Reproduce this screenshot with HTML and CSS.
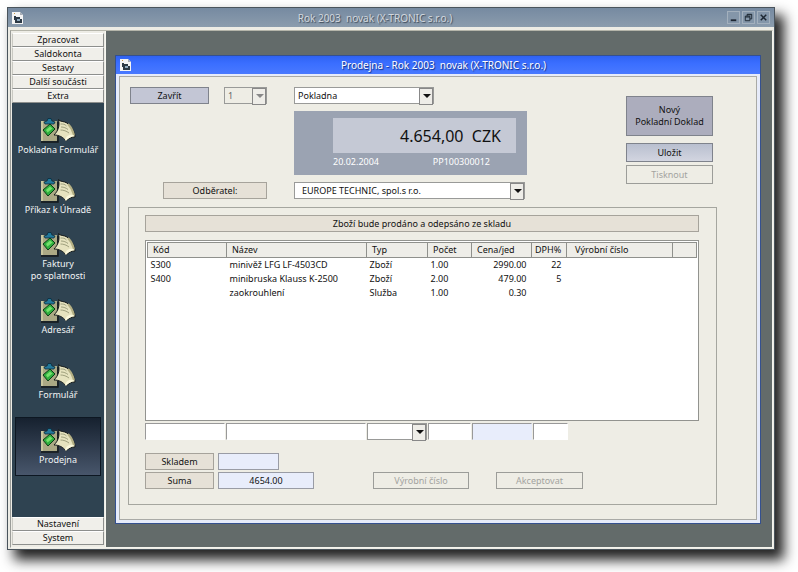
FILE: index.html
```html
<!DOCTYPE html>
<html lang="cs">
<head>
    <meta charset="UTF-8">
    <meta name="viewport" content="width=device-width, initial-scale=1.0">
    <title>Rok 2003 novak (X-TRONIC s.r.o.)</title>
    <link rel="stylesheet" href="styles.css">
</head>
<body>
    <svg class="defs" aria-hidden="true">
        <symbol id="clipboard" viewBox="0 0 36 25">
            <path d="M1 3h16v20H1z" fill="#aba985"/>
            <path d="M1 3h2v20H1z" fill="#c9c7a0"/>
            <path d="M1 24h17V4" fill="none" stroke="#14191a" stroke-width="1.500"/>
            <path d="M4 4l3-1 1-2.500h3L12 3l3 1-1 2H5z" fill="#23789a" stroke="#0a2c3c" stroke-width=".8"/>
            <path d="M3 12l7-6 5 5-7 7z" fill="#2fae3e" stroke="#0c3c16"/>
            <path d="M6 12l4-3.500 2.500 2-5 4z" fill="#74e06c"/>
            <path d="M18.500 1.500C20 4 24 3 27 5c4 3 8 9 8 14-3 0-6 1-9 4-3-4-7-6-12-6 4-4 6-9 4.500-15.500z" fill="#e6e3bf" stroke="#14191a"/>
            <path d="M25 22c1-4 5-7 10-4-3 0-7 2-9 5z" fill="#faf8dc"/>
            <path d="M28 6c3 3 5 7 6 11" fill="none" stroke="#b4b085" stroke-width="2"/>
            <path d="M20.500 6c3 0 4 0 6 2M21 9c3 0 5 1 7 2.500M20.500 12c3 0 6 1 8.500 3" fill="none" stroke="#8b8e6c" stroke-width=".8"/>
        </symbol>
        <symbol id="app" viewBox="0 0 11 12">
            <path d="M0 0h8l3 3v9H0z" fill="#f4f4f4"/>
            <path d="M8 0v3h3z" fill="#a8adb5"/>
            <path d="M2 4h2v1h4v2h2v4H3V8H2z" fill="#2c3945"/>
            <path d="M5 7h3v2H5z" fill="#8fa9bd"/>
            <path d="M2 1h1v1H2z" fill="#c79a4c"/>
        </symbol>
    </svg>

    <div class="window">
        <div class="titlebar">
            <svg class="app-icon"><use href="#app"/></svg>
            <h1 class="title">Rok 2003&nbsp; novak (X-TRONIC s.r.o.)</h1>
            <div class="controls">
                <button class="control" aria-label="Minimalizovat"><svg viewBox="0 0 12 12"><path d="M3 9h6" stroke-width="2"/></svg></button>
                <button class="control" aria-label="Obnovit"><svg viewBox="0 0 12 12"><path d="M4.500 4.500v-2h5v5h-2M2.500 4.500h5v5h-5zM2.500 5.500h5M4.500 3h5"/></svg></button>
                <button class="control" aria-label="Ukončit"><svg viewBox="0 0 12 12"><path d="M3 3l6 6M9 3l-6 6" stroke-width="1.600"/></svg></button>
            </div>
        </div>
        <div class="workspace">
            <nav class="sidebar">
                <button class="tab">Zpracovat</button>
                <button class="tab">Saldokonta</button>
                <button class="tab">Sestavy</button>
                <button class="tab">Další součásti</button>
                <button class="tab">Extra</button>
                <div class="shortcuts">
                    <button class="shortcut"><svg><use href="#clipboard"/></svg>Pokladna Formulář</button>
                    <button class="shortcut"><svg><use href="#clipboard"/></svg>Příkaz k Úhradě</button>
                    <button class="shortcut"><svg><use href="#clipboard"/></svg>Faktury<br>po splatnosti</button>
                    <button class="shortcut"><svg><use href="#clipboard"/></svg>Adresář</button>
                    <button class="shortcut spaced"><svg><use href="#clipboard"/></svg>Formulář</button>
                    <button class="shortcut spaced active"><svg><use href="#clipboard"/></svg>Prodejna</button>
                </div>
                <button class="tab">Nastavení</button>
                <button class="tab">System</button>
            </nav>
            <main class="desktop">
                <div class="dialog">
                    <div class="titlebar dialog-titlebar">
                        <svg class="app-icon"><use href="#app"/></svg>
                        <h2 class="title">Prodejna - Rok 2003&nbsp; novak (X-TRONIC s.r.o.)</h2>
                    </div>
                    <form class="sale">
                        <div class="top">
                            <div class="close-row">
                                <button type="button" class="btn close">Zavřít</button>
                                <span class="combo disabled"><select aria-label="Číslo" disabled><option>1</option></select></span>
                            </div>
                            <span class="combo register"><select aria-label="Typ dokladu"><option>Pokladna</option></select></span>
                            <div class="display">
                                <output class="total">4.654,00&nbsp; CZK</output>
                                <div class="document"><span>20.02.2004</span><span>PP100300012</span></div>
                            </div>
                            <label class="caption customer-label" for="customer">Odběratel:</label>
                            <span class="combo customer"><select id="customer"><option>EUROPE TECHNIC, spol.s r.o.</option></select></span>
                            <div class="actions">
                                <button type="button" class="btn new">Nový<br>Pokladní Doklad</button>
                                <button type="button" class="btn save">Uložit</button>
                                <button type="button" class="btn print" disabled>Tisknout</button>
                            </div>
                        </div>
                        <section class="group">
                            <div class="caption">Zboží bude prodáno a odepsáno ze skladu</div>
                            <div class="list">
                                <table class="items">
                                    <colgroup>
                                        <col class="c-code"><col class="c-name"><col class="c-type"><col class="c-count">
                                        <col class="c-price"><col class="c-vat"><col><col class="c-end">
                                    </colgroup>
                                    <thead>
                                        <tr><th>Kód</th><th>Název</th><th>Typ</th><th>Počet</th><th>Cena/jed</th><th class="vat">DPH%</th><th class="serial-no">Výrobní číslo</th><th></th></tr>
                                    </thead>
                                    <tbody>
                                        <tr><td>S300</td><td>minivěž LFG LF-4503CD</td><td>Zboží</td><td>1.00</td><td class="num">2990.00</td><td class="num">22</td><td></td><td></td></tr>
                                        <tr><td>S400</td><td>minibruska Klauss K-2500</td><td>Zboží</td><td>2.00</td><td class="num">479.00</td><td class="num">5</td><td></td><td></td></tr>
                                        <tr><td></td><td>zaokrouhlení</td><td>Služba</td><td>1.00</td><td class="num">0.30</td><td class="num"></td><td></td><td></td></tr>
                                    </tbody>
                                </table>
                            </div>
                            <div class="entry">
                                <input class="field" aria-label="Kód">
                                <input class="field" aria-label="Název">
                                <span class="combo"><select aria-label="Typ"><option></option></select></span>
                                <input class="field" aria-label="Počet">
                                <input class="field readonly" aria-label="Cena/jed" readonly>
                                <input class="field" aria-label="DPH%">
                            </div>
                            <div class="summary">
                                <label class="caption" for="stock">Skladem</label>
                                <input class="result stock" id="stock" readonly>
                                <label class="caption" for="sum">Suma</label>
                                <input class="result" id="sum" value="4654.00" readonly>
                                <div class="line-actions">
                                    <button type="button" class="btn serial" disabled>Výrobní číslo</button>
                                    <button type="button" class="btn accept" disabled>Akceptovat</button>
                                </div>
                            </div>
                        </section>
                    </form>
                </div>
            </main>
        </div>
    </div>
</body>
</html>
```

FILE: styles.css
```css
* { box-sizing: border-box; }
body { margin: 0; padding: 7px 23px 23px 7px; background: #fff; color: #111; font-family: "Noto Sans", "Open Sans", sans-serif; font-size: 9px; line-height: 12px; }
button, input, select { font: inherit; color: inherit; margin: 0; padding: 0; border-radius: 0; }
.defs { position: absolute; width: 0; height: 0; }

/* main window */
.window { border: 1px solid #4a545c; background: #edece5; box-shadow: 8px 9px 12px 1px #222; }
.titlebar { display: flex; align-items: center; height: 19px; padding: 0 4px; background: linear-gradient(#768aa1, #8b9cad); color: #d3d8de; }
.title { flex: 1; margin: 0; font-size: 10px; font-weight: normal; line-height: 14px; text-align: center; text-shadow: 1px 1px 1px #3d4a58; }
.app-icon { width: 11px; height: 12px; }
.controls { display: flex; gap: 2px; }
.control { width: 13px; height: 13px; border: 1px solid #a3b0bd; background: #8496a9; }
.control svg { display: block; width: 11px; height: 11px; fill: none; stroke: #1d2732; }
.workspace { display: flex; margin: 3px 1px 1px 2px; border: 1px solid #9a9c98; border-color: #b5b5aa #f4f4ee #f4f4ee #9a9c98; }

/* left menu */
.sidebar { display: flex; flex-direction: column; width: 95px; padding: 2px 1px; background: #edece5; border-right: 1px solid #f6f6f0; }
.tab { height: 14px; border: 1px solid #8d8f8d; border-top-color: #fff; border-left-color: #c9c9c2; background: #f0efea; text-align: center; }
.shortcuts { display: flex; flex: 1; flex-direction: column; gap: 1px; padding: 4px 3px; background: #2f4351; }
.shortcut { display: flex; flex-direction: column; align-items: center; justify-content: center; height: 59px; border: 1px solid transparent; background: none; color: #f2f4f5; white-space: nowrap; }
.shortcut svg { width: 36px; height: 25px; margin-bottom: 1px; }
.spaced { margin-top: 5px; }
.active { border-color: #0d1722; background: linear-gradient(#16212f, #48566b); }

/* sales dialog */
.desktop { flex: 1; padding: 24px 11px 23px 9px; background: #636b6a; }
.dialog { border: 1px solid #34508f; background: #e6ebf9; }
.dialog-titlebar { height: 18px; background: linear-gradient(#2f62f2, #3a6eff 40%, #4979ff); color: #fff; }
.dialog-titlebar .title { text-shadow: 1px 1px 1px #14307e; }
.sale { margin: 2px 3px 3px; padding: 10px 39px 14px 8px; border: 1px solid #a9aaa6; background: #eeede5; }
.top { display: grid; grid-template-columns: 137px 233px 1fr; gap: 7px 27px; padding: 0 4px 8px 2px; }
.close-row { display: flex; justify-content: space-between; }
.close-row .combo { width: 43px; }
.btn { height: 19px; border: 1px solid #7f838c; background: linear-gradient(#b9bfcf, #d2d5e0); text-align: center; }
.btn:disabled { border-color: #9c9d99; background: #eeede5; color: #a3a39f; }
.close { width: 79px; height: 17px; background: #c3c6d5; }
.caption { display: block; height: 17px; border: 1px solid #a6a39b; background: #e6e1d7; text-align: center; line-height: 15px; }
.customer-label { width: 104px; justify-self: end; }
.register { width: 140px; }
.customer { grid-column: 2; width: 231px; }

/* drop-downs with a square arrow button */
.combo { position: relative; display: block; height: 17px; }
.combo select { display: block; width: 100%; height: 100%; padding-left: 3px; border: 1px solid #999a98; background: #fff; appearance: none; line-height: 13px; }
.combo::before { content: ""; position: absolute; top: 1px; right: 1px; width: 12px; height: 15px; border: 1px solid #888; background: #eeede8; pointer-events: none; }
.combo::after { content: ""; position: absolute; top: 7px; right: 3px; border: 4px solid transparent; border-top-color: #111; border-bottom: 0; pointer-events: none; }
.customer select { padding-left: 7px; }
.disabled select { background: #eeede5; color: #666; opacity: 1; }
.disabled::after { border-top-color: #888; }

.display { grid-column: 2; height: 64px; padding: 7px 11px 0 39px; background: #9ba3b2; }
.total { display: block; height: 35px; padding-right: 15px; background: #c5c9d5; font-size: 16px; line-height: 36px; text-align: right; }
.document { display: flex; justify-content: space-between; padding: 3px 26px 0 0; color: #fff; }
.actions { grid-area: 1 / 3 / 4 / 4; display: flex; flex-direction: column; gap: 3px; justify-self: end; width: 87px; padding-top: 9px; }
.new { height: 40px; margin-bottom: 4px; background: #acadbd; }

/* item list */
.group { padding: 7px 17px 15px 16px; border: 1px solid #a5a69f; }
.list { min-height: 181px; margin-top: 8px; padding: 1px; border: 1px solid #92938f; background: #fff; }
.items { width: 100%; border-collapse: collapse; table-layout: fixed; }
.c-code { width: 79px; }
.c-name { width: 140px; }
.c-type { width: 61px; }
.c-count { width: 44px; }
.c-price { width: 60px; }
.c-vat { width: 35px; }
.c-end { width: 24px; }
.items th { height: 15px; padding: 0 5px; border: 1px solid #8f908c; background: #eeede8; font-weight: normal; text-align: left; white-space: nowrap; }
.items .vat { padding: 0 3px; }
.items .serial-no { padding-left: 8px; }
.items td { height: 14px; padding: 0 3px; white-space: nowrap; }
.items .num { padding-right: 5px; text-align: right; }
.entry { display: grid; grid-template-columns: 80px 140px 60px 43px 60px 35px; gap: 1px; margin-top: 2px; }
.field { width: 100%; height: 17px; border: 1px solid #fff; border-top-color: #999; border-left-color: #999; background: #fff; }
.readonly { background: #e8edfb; border-right-color: #e8edfb; border-bottom-color: #e8edfb; }
.summary { display: grid; grid-template-columns: 69px 96px 1fr; gap: 2px 4px; margin-top: 13px; }
.result { width: 100%; height: 17px; border: 1px solid #999ca5; background: #e8edfb; text-align: center; }
.stock { grid-column: 2 / 4; width: 61px; }
.line-actions { display: flex; gap: 27px; padding-left: 55px; }
.line-actions .btn { height: 17px; }
.serial { width: 96px; }
.accept { width: 87px; }
```
